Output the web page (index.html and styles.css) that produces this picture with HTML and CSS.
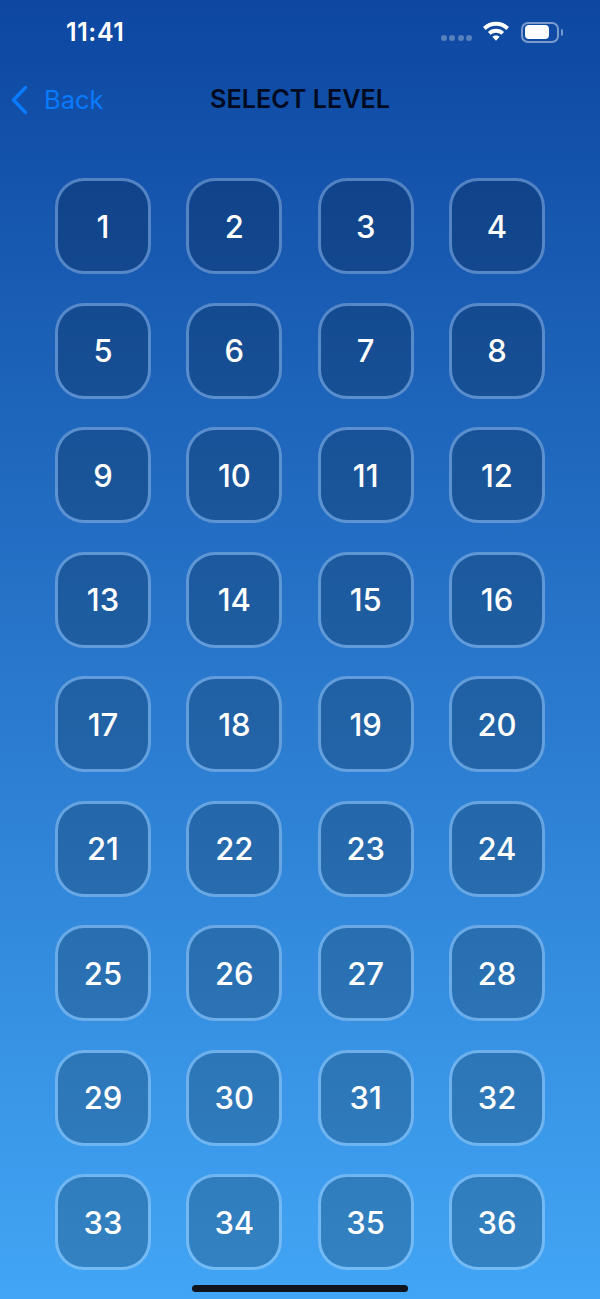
FILE: index.html
```html
<!DOCTYPE html>
<html lang="en">
<head>
  <meta charset="UTF-8">
  <meta name="viewport" content="width=device-width, initial-scale=1.0">
  <title>Select Level</title>
  <link rel="stylesheet" href="styles.css">
</head>
<body>

  <div class="status-bar">
    <span class="time">11:41</span>
    <div class="status-icons">
      <div class="signal"><i></i><i></i><i></i><i></i></div>
      <svg class="wifi" width="34" height="24" viewBox="0 0 28 20">
        <path d="M14 3.2c4.2 0 8 1.600 10.800 4.300l-2.200 2.400C20.300 7.800 17.300 6.500 14 6.500S7.700 7.800 5.400 9.900L3.200 7.500C6 4.800 9.800 3.200 14 3.200z" fill="#fff"/>
        <path d="M14 8.900c2.600 0 5 1 6.700 2.700l-2.200 2.400c-1.200-1.100-2.800-1.800-4.500-1.800s-3.300.7-4.500 1.800l-2.200-2.400C9 9.900 11.400 8.900 14 8.900z" fill="#fff"/>
        <path d="M14 14.500c1.200 0 2.200.4 3 1.200L14 19l-3-3.300c.8-.8 1.800-1.200 3-1.200z" fill="#fff"/>
      </svg>
      <div class="battery"><div class="battery-level"></div></div>
      <div class="battery-cap"></div>
    </div>
  </div>

  <header class="nav">
    <a class="back">
      <svg width="18" height="30" viewBox="0 0 18 30">
        <path d="M15.500 2.500L3.500 15l12 12.500" fill="none" stroke="#0a7aff" stroke-width="3.400" stroke-linecap="round" stroke-linejoin="round"/>
      </svg>
      <span>Back</span>
    </a>
    <h1 class="title">SELECT LEVEL</h1>
  </header>

  <div class="level-grid">
    <button class="level">1</button>
    <button class="level">2</button>
    <button class="level">3</button>
    <button class="level">4</button>
    <button class="level">5</button>
    <button class="level">6</button>
    <button class="level">7</button>
    <button class="level">8</button>
    <button class="level">9</button>
    <button class="level">10</button>
    <button class="level">11</button>
    <button class="level">12</button>
    <button class="level">13</button>
    <button class="level">14</button>
    <button class="level">15</button>
    <button class="level">16</button>
    <button class="level">17</button>
    <button class="level">18</button>
    <button class="level">19</button>
    <button class="level">20</button>
    <button class="level">21</button>
    <button class="level">22</button>
    <button class="level">23</button>
    <button class="level">24</button>
    <button class="level">25</button>
    <button class="level">26</button>
    <button class="level">27</button>
    <button class="level">28</button>
    <button class="level">29</button>
    <button class="level">30</button>
    <button class="level">31</button>
    <button class="level">32</button>
    <button class="level">33</button>
    <button class="level">34</button>
    <button class="level">35</button>
    <button class="level">36</button>
  </div>

  <div class="home-indicator"></div>

</body>
</html>
```

FILE: styles.css
```css
* {
  box-sizing: border-box;
  margin: 0;
  padding: 0;
}
html, body {
  height: 1299px;
  overflow: hidden;
}
body {
  position: relative;
  font-family: Inter, "Liberation Sans", sans-serif;
  background: linear-gradient(to bottom, #0d47a1, #42a5f5);
}
.status-bar {
  height: 64px;
  display: flex;
  justify-content: space-between;
  align-items: center;
  padding: 0 37px 0 66px;
}
.time {
  color: white;
  font-size: 25px;
  font-weight: 600;
  letter-spacing: 0.6px;
}
.status-icons {
  display: flex;
  align-items: center;
}
.signal {
  display: flex;
  gap: 2.5px;
  margin-right: 7px;
  margin-top: 12px;
}
.signal i {
  width: 6px;
  height: 6px;
  border-radius: 50%;
  background-color: rgba(255, 255, 255, 0.3);
}
.wifi {
  margin-right: 8px;
  margin-top: -4px;
}
.battery {
  width: 38px;
  height: 21px;
  border: 2px solid rgba(255, 255, 255, 0.45);
  border-radius: 7px;
  padding: 1.5px;
}
.battery-level {
  width: 24px;
  height: 100%;
  background-color: white;
  border-radius: 4px;
}
.battery-cap {
  width: 2px;
  height: 7px;
  margin-left: 2px;
  background-color: rgba(255, 255, 255, 0.45);
  border-radius: 0 2px 2px 0;
}
.nav {
  position: relative;
  height: 70px;
  display: flex;
  justify-content: center;
  align-items: center;
}
.back {
  position: absolute;
  left: 10px;
  top: 20px;
  display: flex;
  align-items: center;
  gap: 16px;
  color: #0a7aff;
  font-size: 25.500px;
}
.title {
  color: #010a20;
  font-size: 25.200px;
  font-weight: 600;
}
.level-grid {
  display: grid;
  grid-template-columns: repeat(4, 96px);
  grid-auto-rows: 96px;
  justify-content: space-between;
  row-gap: 28.5px;
  margin-top: 44px;
  padding: 0 55px;
}
.level {
  display: flex;
  justify-content: center;
  align-items: center;
  font-family: inherit;
  font-size: 31px;
  font-weight: 500;
  color: white;
  background-color: rgba(0, 0, 0, 0.2);
  background-clip: padding-box;
  border: 3px solid rgba(255, 255, 255, 0.27);
  border-radius: 29px;
}
.home-indicator {
  position: absolute;
  left: 192px;
  bottom: 7px;
  width: 216px;
  height: 7px;
  background-color: #10141c;
  border-radius: 4px;
}
```
